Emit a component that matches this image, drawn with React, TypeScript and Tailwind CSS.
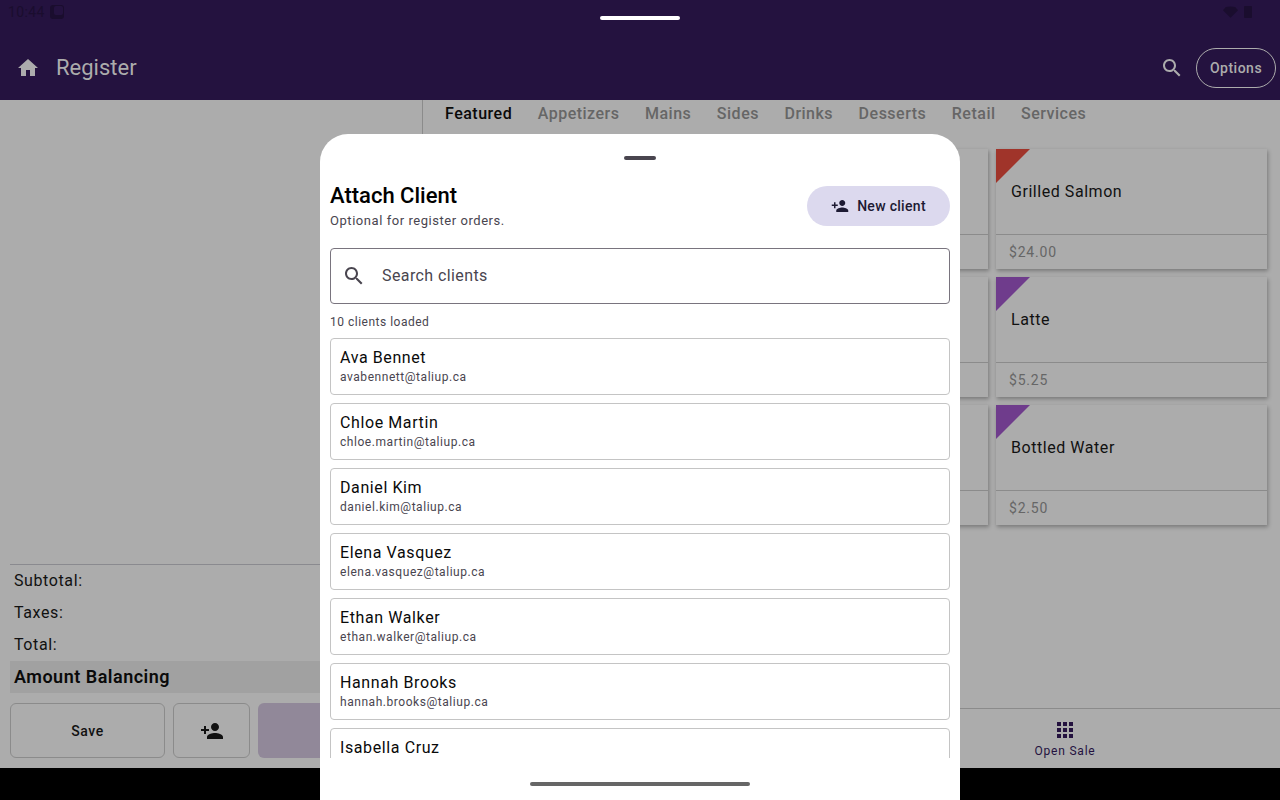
const HOME = 'M10 20v-6h4v6h5v-8h3L12 3 2 12h3v8z';
const SEARCH = 'M15.5 14h-.79l-.28-.27C15.41 12.59 16 11.11 16 9.5 16 5.91 13.09 3 9.5 3S3 5.91 3 9.5 5.91 16 9.5 16c1.61 0 3.09-.59 4.23-1.57l.27.28v.79l5 4.99L20.49 19l-4.99-5zm-6 0C7.01 14 5 11.99 5 9.5S7.01 5 9.5 5 14 7.01 14 9.5 11.99 14 9.5 14z';
const PERSON_ADD = 'M15 12c2.21 0 4-1.79 4-4s-1.79-4-4-4-4 1.79-4 4 1.79 4 4 4zm-9-2V7H4v3H1v2h3v3h2v-3h3v-2H6zm9 4c-2.67 0-8 1.34-8 4v2h16v-2c0-2.66-5.33-4-8-4z';
const APPS = 'M4 8h4V4H4v4zm6 12h4v-4h-4v4zm-6 0h4v-4H4v4zm0-6h4v-4H4v4zm6 0h4v-4h-4v4zm6-10v4h4V4h-4zm-6 4h4V4h-4v4zm6 6h4v-4h-4v4zm0 6h4v-4h-4v4z';

const tabs = ['Featured', 'Appetizers', 'Mains', 'Sides', 'Drinks', 'Desserts', 'Retail', 'Services'];

const products = [
    { name: '', price: '', tag: '' },
    { name: '', price: '', tag: '' },
    { name: 'Grilled Salmon', price: '$24.00', tag: 'border-t-[#a0342a]' },
    { name: '', price: '', tag: '' },
    { name: '', price: '', tag: '' },
    { name: 'Latte', price: '$5.25', tag: 'border-t-[#6f3c8c]' },
    { name: '', price: '', tag: '' },
    { name: '', price: '', tag: '' },
    { name: 'Bottled Water', price: '$2.50', tag: 'border-t-[#6f3c8c]' },
];

const clients = [
    { name: 'Ava Bennet', email: 'avabennett@taliup.ca' },
    { name: 'Chloe Martin', email: 'chloe.martin@taliup.ca' },
    { name: 'Daniel Kim', email: 'daniel.kim@taliup.ca' },
    { name: 'Elena Vasquez', email: 'elena.vasquez@taliup.ca' },
    { name: 'Ethan Walker', email: 'ethan.walker@taliup.ca' },
    { name: 'Hannah Brooks', email: 'hannah.brooks@taliup.ca' },
    { name: 'Isabella Cruz', email: '' },
];

function Icon({ d, className }: { d: string; className: string }) {
    return (
        <svg viewBox="0 0 24 24" className={className} fill="currentColor">
            <path d={d} />
        </svg>
    );
}

function TopBar() {
    return (
        <header className="relative h-[100px] shrink-0 bg-[#24123f]">
            <div className="flex h-[24px] items-center pl-[8px] pr-[28px] text-[#1a0d2e]">
                <span className="text-[14px] tracking-[0.4px]">10:44</span>
                <div className="ml-[5px] flex h-[14px] w-[14px] items-start justify-end rounded-[3px] bg-[#1a0d2e]">
                    <div className="mr-[1px] mt-[1px] h-[9px] w-[9px] rounded-[2px] bg-[#24123f]" />
                </div>
                <div className="ml-auto flex items-center gap-[6px]">
                    <svg viewBox="0 0 16 12" className="h-[12px] w-[15px]" fill="currentColor">
                        <path d="M8 12L0 4L3 .6Q8-.4 13 .6L16 4z" />
                    </svg>
                    <div className="h-[12px] w-[8px] rounded-[1px] bg-[#1a0d2e]" />
                </div>
            </div>
            <div className="absolute left-[600px] top-[16px] h-[4px] w-[80px] rounded-full bg-white" />
            <div className="mt-[24px] flex h-[40px] items-center pl-[16px] pr-[4px] text-[#acacac]">
                <Icon d={HOME} className="h-[24px] w-[24px]" />
                <span className="ml-[16px] text-[22px] leading-[28px]">Register</span>
                <Icon d={SEARCH} className="ml-auto h-[24px] w-[24px]" />
                <div className="ml-[12px] flex h-[40px] w-[80px] items-center justify-center rounded-full border border-[#acacac] text-[14px] font-medium tracking-[0.5px]">
                    Options
                </div>
            </div>
        </header>
    );
}

function OrderPanel() {
    return (
        <aside className="flex w-[422px] shrink-0 flex-col px-[10px] pb-[10px]">
            <div className="flex-1" />
            <div className="h-[97px] border-t border-[#8a8a8f] text-[16px] leading-[32px] tracking-[0.6px] text-[#111]">
                <div className="h-[32px] pl-[4px]">Subtotal:</div>
                <div className="h-[32px] pl-[4px]">Taxes:</div>
                <div className="h-[32px] pl-[4px]">Total:</div>
            </div>
            <div className="h-[32px] bg-[#a1a1a1] pl-[4px] text-[18px] font-semibold leading-[32px] tracking-[0.5px] text-[#0a0a0a]">
                Amount Balancing
            </div>
            <div className="mt-[10px] flex h-[55px] gap-[8px]">
                <div className="flex w-[155px] items-center justify-center rounded-[6px] border border-[#8b8b8b] pt-[1px] text-[14px] font-medium tracking-[0.5px] text-[#111]">
                    Save
                </div>
                <div className="flex w-[77px] items-center justify-center rounded-[6px] border border-[#8b8b8b] pl-[1px] pt-[1px] text-[#111]">
                    <Icon d={PERSON_ADD} className="h-[24px] w-[24px]" />
                </div>
                <div className="flex-1 rounded-[6px] bg-[#918899]" />
            </div>
        </aside>
    );
}

function ProductCard({ name, price, tag }: { name: string; price: string; tag: string }) {
    return (
        <div className="relative flex h-[120px] flex-col bg-[#acacac] shadow-[1px_2px_4px_rgba(0,0,0,0.3)]">
            {tag && (
                <div className={`absolute left-0 top-0 h-0 w-0 border-r-[34px] border-t-[34px] border-r-transparent ${tag}`} />
            )}
            <div className="h-[86px] border-b border-[#8b8b8b] pl-[15px] pt-[31px] text-[16px] leading-[24px] tracking-[0.55px] text-[#111]">
                {name}
            </div>
            <div className="pl-[13px] pt-[7px] text-[14px] leading-[20px] tracking-[0.8px] text-[#666]">{price}</div>
        </div>
    );
}

function CatalogPanel() {
    return (
        <main className="flex min-w-0 flex-1 flex-col border-l border-[#8b8b8b]">
            <nav className="flex h-[28px] shrink-0 items-center gap-[25.5px] pl-[22px] text-[16px] font-medium tracking-[0.5px] text-[#666]">
                {tabs.map((tab, i) => (
                    <span key={tab} className={i === 0 ? 'text-[#0a0a0a]' : ''}>
                        {tab}
                    </span>
                ))}
            </nav>
            <div className="grid flex-1 grid-cols-[271px_271px_271px] content-start gap-[8px] pl-[15px] pt-[21px]">
                {products.map((product, i) => (
                    <ProductCard key={i} {...product} />
                ))}
            </div>
            <div className="flex h-[60px] shrink-0 justify-end border-t border-[#8b8b8b] pr-[115px]">
                <div className="flex w-[200px] flex-col items-center pt-[9px] text-[#24123f]">
                    <Icon d={APPS} className="h-[24px] w-[24px]" />
                    <span className="pt-[1px] text-[12px] leading-[16px] tracking-[0.8px]">Open Sale</span>
                </div>
            </div>
        </main>
    );
}

function ClientSheet() {
    return (
        <section className="absolute bottom-0 left-[320px] top-[134px] flex w-[640px] flex-col rounded-t-[28px] bg-white px-[10px]">
            <div className="mx-auto mt-[22px] h-[4px] w-[32px] shrink-0 rounded-full bg-[#49454f]" />
            <div className="mt-[22px] flex shrink-0 items-start justify-between">
                <div>
                    <h2 className="text-[22px] font-medium leading-[28px] text-black">Attach Client</h2>
                    <p className="pt-[1px] text-[13px] leading-[19px] tracking-[0.55px] text-[#49454f]">Optional for register orders.</p>
                </div>
                <div className="mt-[4px] flex h-[40px] w-[143px] items-center justify-center gap-[8px] rounded-full bg-[#dcd9ee] text-[14px] font-medium tracking-[0.3px] text-[#1d1a33]">
                    <Icon d={PERSON_ADD} className="h-[18px] w-[18px]" />
                    New client
                </div>
            </div>
            <div className="mt-[18px] flex h-[56px] shrink-0 items-center rounded-[4px] border border-[#79747e] pl-[11px] text-[#49454f]">
                <Icon d={SEARCH} className="h-[24px] w-[24px]" />
                <span className="ml-[16px] text-[16px] tracking-[0.4px]">Search clients</span>
            </div>
            <p className="mt-[10px] shrink-0 text-[12px] leading-[16px] tracking-[0.5px] text-[#49454f]">10 clients loaded</p>
            <div className="mt-[8px] flex h-[420px] shrink-0 flex-col gap-[8px] overflow-hidden">
                {clients.map((client) => (
                    <div key={client.name} className="h-[57px] shrink-0 rounded-[4px] border border-[#c4c4c4] px-[9px] pt-[8px]">
                        <div className="text-[16px] leading-[22px] tracking-[0.6px] text-[#0a0a0a]">{client.name}</div>
                        {client.email && (
                            <div className="text-[12px] leading-[16px] tracking-[0.55px] text-[#49454f]">{client.email}</div>
                        )}
                    </div>
                ))}
            </div>
            <div className="mx-auto mt-[24px] h-[4px] w-[220px] shrink-0 rounded-full bg-[#666]" />
        </section>
    );
}

export default function App() {
    return (
        <div className="relative flex h-[800px] w-[1280px] flex-col overflow-hidden bg-black font-['Roboto',sans-serif]">
            <TopBar />
            <div className="flex h-[668px] shrink-0 bg-[#acacac]">
                <OrderPanel />
                <CatalogPanel />
            </div>
            <ClientSheet />
        </div>
    );
}
